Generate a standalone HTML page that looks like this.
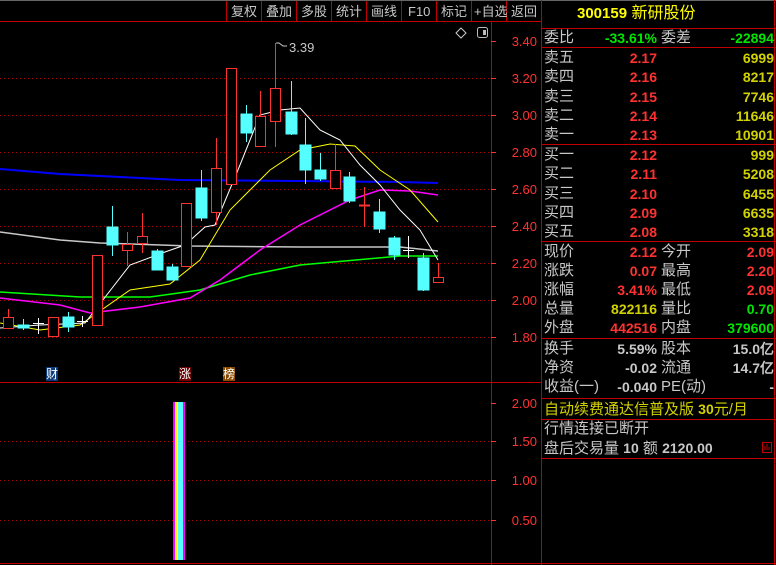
<!DOCTYPE html><html><head><meta charset="utf-8"><style>
body{margin:0;background:#000;width:776px;height:565px;overflow:hidden;position:relative;font-family:"Liberation Sans","Noto Sans CJK SC",sans-serif}
.t{position:absolute;font-size:15px;line-height:16px;white-space:nowrap}
.w{color:#c8c8c8}.r{color:#ff3232}.y{color:#d2d200}.g{color:#00e600}.yy{color:#ffff00}
.n{font-family:"Liberation Sans",sans-serif;font-weight:bold;font-size:14px}
.tb{font-size:13px;top:4px}
</style></head><body>
<svg width="776" height="565" style="position:absolute;left:0;top:0" xmlns="http://www.w3.org/2000/svg">
<rect x="0" y="0" width="776" height="1" fill="#666"/>
<line x1="0" y1="21.5" x2="541" y2="21.5" stroke="#c00000"/>
<g stroke="#c00000">
<line x1="226.5" y1="1" x2="226.5" y2="21"/><line x1="261.5" y1="1" x2="261.5" y2="21"/><line x1="296.5" y1="1" x2="296.5" y2="21"/><line x1="331.5" y1="1" x2="331.5" y2="21"/><line x1="366.5" y1="1" x2="366.5" y2="21"/><line x1="401.5" y1="1" x2="401.5" y2="21"/><line x1="436.5" y1="1" x2="436.5" y2="21"/><line x1="471.5" y1="1" x2="471.5" y2="21"/><line x1="506.5" y1="1" x2="506.5" y2="21"/>
<line x1="541.5" y1="0" x2="541.5" y2="565"/>
<line x1="491.5" y1="22" x2="491.5" y2="565"/>
<line x1="0" y1="382.5" x2="541" y2="382.5"/>
<line x1="0" y1="563.5" x2="776" y2="563.5"/>
<line x1="774.5" y1="0" x2="774.5" y2="565"/>
</g>
<g stroke="#b00000" stroke-dasharray="1,3">
<line x1="0" y1="78.5" x2="490" y2="78.5"/><line x1="0" y1="115.5" x2="490" y2="115.5"/><line x1="0" y1="152.5" x2="490" y2="152.5"/><line x1="0" y1="189.5" x2="490" y2="189.5"/><line x1="0" y1="226.5" x2="490" y2="226.5"/><line x1="0" y1="263.5" x2="490" y2="263.5"/><line x1="0" y1="300.5" x2="490" y2="300.5"/><line x1="0" y1="337.5" x2="490" y2="337.5"/>
<line x1="0" y1="441.5" x2="490" y2="441.5"/><line x1="0" y1="480.5" x2="490" y2="480.5"/><line x1="0" y1="520.5" x2="490" y2="520.5"/>
</g>
<g stroke="#ff3232">
<line x1="491" y1="41.5" x2="496" y2="41.5"/><line x1="491" y1="78.5" x2="496" y2="78.5"/><line x1="491" y1="115.5" x2="496" y2="115.5"/><line x1="491" y1="152.5" x2="496" y2="152.5"/><line x1="491" y1="189.5" x2="496" y2="189.5"/><line x1="491" y1="226.5" x2="496" y2="226.5"/><line x1="491" y1="263.5" x2="496" y2="263.5"/><line x1="491" y1="300.5" x2="496" y2="300.5"/><line x1="491" y1="337.5" x2="496" y2="337.5"/>
<line x1="491" y1="403.5" x2="496" y2="403.5"/><line x1="491" y1="441.5" x2="496" y2="441.5"/><line x1="491" y1="480.5" x2="496" y2="480.5"/><line x1="491" y1="520.5" x2="496" y2="520.5"/>
</g>
<g font-family="Liberation Sans" font-size="13" fill="#ff3232" text-anchor="end">
<text x="537" y="46">3.40</text><text x="537" y="83">3.20</text><text x="537" y="120">3.00</text><text x="537" y="157">2.80</text><text x="537" y="194">2.60</text><text x="537" y="231">2.40</text><text x="537" y="268">2.20</text><text x="537" y="305">2.00</text><text x="537" y="342">1.80</text>
<text x="537" y="408">2.00</text><text x="537" y="446">1.50</text><text x="537" y="485">1.00</text><text x="537" y="525">0.50</text>
</g>
<g fill="none" stroke-width="1">
<polyline stroke="#0000ff" stroke-width="2" points="0,169 60,174 120,177 180,180 300,181 400,182 438,183"/>
<polyline stroke="#c8c8c8" stroke-width="1.5" points="0,232 60,240 100,243 190,246 300,247 400,247 438,251"/>
<polyline stroke="#00ff00" stroke-width="1.5" points="0,292 80,297 150,297 200,290 250,275 300,265 400,256 438,256"/>
<polyline stroke="#ff00ff" stroke-width="1.5" points="0,298 60,305 90,313 140,307 190,298 220,280 260,250 300,225 350,200 380,190 410,191 438,195"/>
<polyline stroke="#ffff00" points="0,323 40,330 80,325 130,290 170,284 200,260 230,210 270,170 300,150 330,144 355,146 380,170 410,190 438,222"/>
<polyline stroke="#ffffff" points="0,328 40,325 85,323 130,265 165,252 185,245 205,227 215,225 240,165 260,115 280,110 300,108 320,130 340,140 360,165 380,185 400,210 420,230 438,260"/>
</g>
<g stroke="#ff3232" fill="#000">
<line x1="8.5" y1="309" x2="8.5" y2="317"/><rect x="3.5" y="317.5" width="10" height="11"/>
<rect x="48.5" y="317.5" width="10" height="19"/>
<rect x="92.5" y="255.5" width="10" height="70"/>
<line x1="127.5" y1="232" x2="127.5" y2="266"/><rect x="122.5" y="244.5" width="10" height="6" fill="#000"/>
<line x1="142.5" y1="213" x2="142.5" y2="253"/><rect x="137.5" y="236.5" width="10" height="7"/>
<rect x="181.5" y="203.5" width="10" height="63"/>
<line x1="216.5" y1="138" x2="216.5" y2="225"/><rect x="211.5" y="168.5" width="10" height="44"/>
<rect x="226.5" y="68.5" width="10" height="116"/>
<line x1="260.5" y1="91" x2="260.5" y2="147"/><rect x="255.5" y="116.5" width="10" height="30"/>
<line x1="275.5" y1="43" x2="275.5" y2="147"/><rect x="270.5" y="88.5" width="10" height="33"/>
<line x1="335.5" y1="144" x2="335.5" y2="188"/><rect x="330.5" y="170.5" width="10" height="18"/>
<line x1="364.5" y1="187" x2="364.5" y2="227"/><line x1="359" y1="205.5" x2="370" y2="205.5" stroke-width="2"/>
<line x1="438.5" y1="263" x2="438.5" y2="277"/><rect x="433.5" y="277.5" width="10" height="5"/>
</g>
<g stroke="#55ffff" fill="#55ffff">
<line x1="23.5" y1="319" x2="23.5" y2="330"/><rect x="18" y="325" width="11" height="3"/>
<line x1="68.5" y1="312" x2="68.5" y2="332"/><rect x="63" y="317" width="11" height="10"/>
<line x1="112.5" y1="206" x2="112.5" y2="256"/><rect x="107" y="227" width="11" height="18"/>
<line x1="157.5" y1="249" x2="157.5" y2="270"/><rect x="152" y="251" width="11" height="19"/>
<line x1="172.5" y1="264" x2="172.5" y2="280"/><rect x="167" y="267" width="11" height="13"/>
<line x1="201.5" y1="170" x2="201.5" y2="221"/><rect x="196" y="188" width="11" height="30"/>
<line x1="246.5" y1="105" x2="246.5" y2="142"/><rect x="241" y="114" width="11" height="19"/>
<line x1="291.5" y1="81" x2="291.5" y2="135"/><rect x="286" y="112" width="11" height="22"/>
<line x1="305.5" y1="118" x2="305.5" y2="184"/><rect x="300" y="145" width="11" height="25"/>
<line x1="320.5" y1="153" x2="320.5" y2="181"/><rect x="315" y="170" width="11" height="9"/>
<line x1="349.5" y1="172" x2="349.5" y2="203"/><rect x="344" y="177" width="11" height="24"/>
<line x1="379.5" y1="199" x2="379.5" y2="233"/><rect x="374" y="212" width="11" height="17"/>
<line x1="394.5" y1="236" x2="394.5" y2="260"/><rect x="389" y="238" width="11" height="17"/>
<line x1="423.5" y1="253" x2="423.5" y2="291"/><rect x="418" y="258" width="11" height="32"/>
</g>
<g stroke="#fff">
<line x1="38.5" y1="318" x2="38.5" y2="334"/><line x1="33" y1="323.5" x2="44" y2="323.5"/>
<line x1="82.5" y1="316" x2="82.5" y2="327"/><line x1="77" y1="321.5" x2="88" y2="321.5"/>
<line x1="408.5" y1="236" x2="408.5" y2="258"/><line x1="403" y1="250.5" x2="414" y2="250.5"/>
</g>
<text x="289" y="52" font-family="Liberation Sans" font-size="13" fill="#c8c8c8">3.39</text>
<path d="M276 43h3l4 3h4" stroke="#c8c8c8" fill="none"/>
<path d="M461 28l5 5-5 5-5-5z" stroke="#ccc" fill="none"/>
<rect x="477.5" y="27.5" width="10" height="10" rx="2" stroke="#bbb" fill="none"/><rect x="483" y="30" width="3" height="5" fill="#bbb"/>
<rect x="173" y="402" width="2" height="158" fill="#ff00ff"/><rect x="175" y="402" width="2" height="158" fill="#ffff00"/><rect x="177" y="402" width="1" height="158" fill="#fff"/><rect x="178" y="402" width="5" height="158" fill="#55ffff"/><rect x="183" y="402" width="2" height="158" fill="#ff00ff"/>
<g stroke="#c00000">
<line x1="541" y1="28.5" x2="776" y2="28.5"/><line x1="541" y1="47.5" x2="776" y2="47.5"/><line x1="541" y1="144.5" x2="776" y2="144.5"/><line x1="541" y1="241.5" x2="776" y2="241.5"/><line x1="541" y1="338.5" x2="776" y2="338.5"/><line x1="541" y1="398.5" x2="776" y2="398.5"/><line x1="541" y1="419.5" x2="776" y2="419.5"/><line x1="541" y1="458.5" x2="776" y2="458.5"/>
</g>
<rect x="762.5" y="442.5" width="9" height="10" stroke="#c00000" fill="none"/>
<path d="M765 450v-4M767 450v-6M769 450v-3" stroke="#c00000"/>
</svg>
<div class="t" style="left:46px;top:367px;background:#0a3a7a;color:#fff;font-size:12px;line-height:14px">财</div>
<div class="t" style="left:179px;top:367px;background:#6a0000;color:#fff;font-size:12px;line-height:14px">涨</div>
<div class="t" style="left:223px;top:367px;background:#8a4a00;color:#fff;font-size:12px;line-height:14px">榜</div>
<div class="t w tb" style="left:231px">复权</div>
<div class="t w tb" style="left:266px">叠加</div>
<div class="t w tb" style="left:301px">多股</div>
<div class="t w tb" style="left:336px">统计</div>
<div class="t w tb" style="left:371px">画线</div>
<div class="t w tb" style="left:408px">F10</div>
<div class="t w tb" style="left:441px">标记</div>
<div class="t w tb" style="left:474px">+自选</div>
<div class="t w tb" style="left:511px">返回</div>
<div class="t yy" style="left:577px;top:6px;font-size:16px"><b style="font-size:15px">300159</b> 新研股份</div>
<div class="t w" style="left:544px;top:30px">委比</div><div class="t g n" style="left:590px;top:30px;width:67px;text-align:right">-33.61%</div><div class="t w" style="left:661px;top:30px">委差</div><div class="t g n" style="left:700px;top:30px;width:74px;text-align:right">-22894</div>
<div id="ob"></div>
<script>
var rows=[["卖五","2.17","6999",57],["卖四","2.16","8217",76],["卖三","2.15","7746",96],["卖二","2.14","11646",115],["卖一","2.13","10901",134],["买一","2.12","999",154],["买二","2.11","5208",173],["买三","2.10","6455",193],["买四","2.09","6635",212],["买五","2.08","3318",231]];
var h="";rows.forEach(function(r){h+='<div class="t w" style="left:544px;top:'+(r[3]-7)+'px">'+r[0]+'</div><div class="t r n" style="left:590px;top:'+(r[3]-7)+'px;width:67px;text-align:right">'+r[1]+'</div><div class="t y n" style="left:680px;top:'+(r[3]-7)+'px;width:94px;text-align:right">'+r[2]+'</div>';});
var s=[["现价","2.12","r","今开","2.09","r",252],["涨跌","0.07","r","最高","2.20","r",271],["涨幅","3.41%","r","最低","2.09","r",290],["总量","822116","y","量比","0.70","g",309],["外盘","442516","r","内盘","379600","g",328],["换手","5.59%","w","股本","15.0亿","w",349],["净资","-0.02","w","流通","14.7亿","w",368],["收益(一)","-0.040","w","PE(动)","-","w",387]];
s.forEach(function(r){var t=r[6]-8;h+='<div class="t w" style="left:544px;top:'+t+'px">'+r[0]+'</div><div class="t n '+r[2]+'" style="left:590px;top:'+t+'px;width:67px;text-align:right">'+r[1]+'</div><div class="t w" style="left:661px;top:'+t+'px">'+r[3]+'</div><div class="t n '+r[5]+'" style="left:690px;top:'+t+'px;width:84px;text-align:right">'+r[4]+'</div>';});
document.getElementById("ob").innerHTML=h;
</script>
<div class="t y" style="left:544px;top:401px">自动续费通达信普及版 <span class="n">30</span>元/月</div>
<div class="t w" style="left:544px;top:421px">行情连接已断开</div>
<div class="t w" style="left:544px;top:440px">盘后交易量 <span class="n">10</span> 额 <span class="n">2120.00</span></div>
</body></html>
